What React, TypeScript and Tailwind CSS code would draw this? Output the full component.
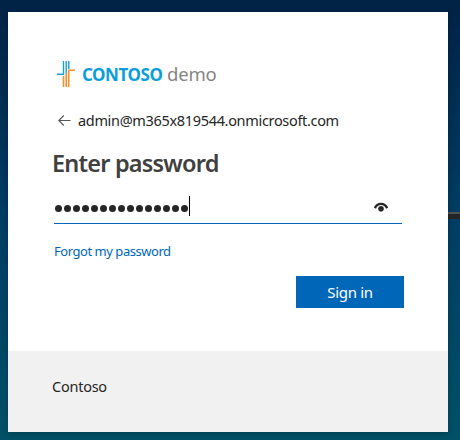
const PASSWORD_LENGTH = 15;

function ContosoMark() {
  return (
    <svg width="18" height="26" viewBox="0 0 18 26" fill="none" className="shrink-0">
      <path d="M0 13.3H6.5V0M9.2 0V12M11.8 0V8" stroke="#1ba0d8" strokeWidth="1.4" />
      <path d="M18 9.2H11.7V26M9.2 12V26M6.5 15V26" stroke="#f7902c" strokeWidth="1.6" />
    </svg>
  );
}

function BackArrow() {
  return (
    <svg width="13" height="12" viewBox="0 0 13 12" fill="none" className="shrink-0">
      <path d="M12.5 6.5H1M5.8 1.5L.8 6.5L5.8 11.5" stroke="#555" strokeWidth="1.1" />
    </svg>
  );
}

function RevealIcon() {
  return (
    <svg width="14" height="10" viewBox="0 0 14 10" fill="none" className="shrink-0">
      <path d="M.9 6.2C2 3.4 4.2 1.9 7 1.9S12 3.4 13.1 6.2" stroke="#262626" strokeWidth="2.4" />
      <circle cx="7" cy="6.8" r="2.8" fill="#262626" />
    </svg>
  );
}

export default function App() {
  return (
    <div className="h-[440px] w-[460px] overflow-hidden bg-linear-to-b from-[#002245] via-[#003d64] to-[#005067] font-['Noto_Sans','Open_Sans',sans-serif] text-[#262626]">
      <div className="flex pt-3 pl-2">
        <main className="flex h-[420px] w-[440px] shrink-0 flex-col bg-white shadow-[0_2px_6px_rgba(0,0,0,0.2)]">
          <section className="h-[339px] px-11">
            <div className="flex h-[87px] items-end pl-[5px]">
              <div className="flex h-[38px] items-start">
                <ContosoMark />
                <div className="ml-[7px] flex items-baseline leading-[26px] whitespace-nowrap">
                  <span className="w-[85px] text-[17px] font-bold tracking-[-0.45px] text-[#0b9ed9]">CONTOSO</span>
                  <span className="text-[18.5px] tracking-[-0.2px] text-[#858585]">demo</span>
                </div>
              </div>
            </div>
            <div className="mt-[10px] flex h-[22px] items-center pl-[6px]">
              <BackArrow />
              <span className="ml-[7px] text-[14.5px] leading-[22px] tracking-[-0.33px] whitespace-nowrap">
                admin@m365x819544.onmicrosoft.com
              </span>
            </div>
            <h1 className="mt-4 h-8 text-[23.5px] leading-8 font-semibold tracking-[-0.8px] whitespace-nowrap text-[#404040]">
              Enter password
            </h1>
            <div className="mt-[17px] ml-[2px] flex h-7 w-[348px] border-b border-[#0067b8]">
              <div className="flex h-6 items-center gap-[2px] pl-px" role="textbox" aria-label="Password">
                {Array.from({ length: PASSWORD_LENGTH }, (_, i) => (
                  <span key={i} className="size-[7px] rounded-full bg-[#262626]" />
                ))}
              </div>
              <span className="ml-px h-5 w-px bg-black" />
              <button className="mt-[6px] mr-[14px] ml-auto flex h-[10px]" aria-label="Show password">
                <RevealIcon />
              </button>
            </div>
            <a className="mt-[17px] ml-[2px] block h-5 text-[13px] leading-5 tracking-[-0.46px] whitespace-nowrap text-[#0067b8]">
              Forgot my password
            </a>
            <div className="mt-[15px] flex justify-end">
              <button className="h-8 w-[108px] bg-[#0067b8] text-[15px] leading-8 tracking-[-0.3px] text-white">
                Sign in
              </button>
            </div>
          </section>
          <footer className="h-[81px] bg-[#f1f1f1] pt-[25px] pl-11 text-[14.5px] leading-5 tracking-[-0.25px]">
            Contoso
          </footer>
        </main>
        <div className="mt-[200px] h-[7px] w-3 border-t-2 border-[#505154] bg-[#242424]" />
      </div>
    </div>
  );
}
